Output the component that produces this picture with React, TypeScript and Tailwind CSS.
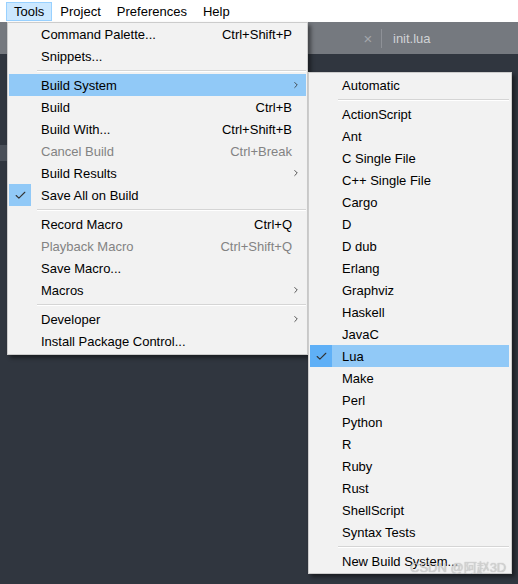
import { Check, ChevronRight } from 'lucide-react';

type Item =
  | { sep: true }
  | {
      sep?: false;
      label: string;
      shortcut?: string;
      sub?: boolean;
      checked?: boolean;
      disabled?: boolean;
      active?: boolean;
    };

const toolsMenu: Item[] = [
  { label: 'Command Palette...', shortcut: 'Ctrl+Shift+P' },
  { label: 'Snippets...' },
  { sep: true },
  { label: 'Build System', sub: true, active: true },
  { label: 'Build', shortcut: 'Ctrl+B' },
  { label: 'Build With...', shortcut: 'Ctrl+Shift+B' },
  { label: 'Cancel Build', shortcut: 'Ctrl+Break', disabled: true },
  { label: 'Build Results', sub: true },
  { label: 'Save All on Build', checked: true },
  { sep: true },
  { label: 'Record Macro', shortcut: 'Ctrl+Q' },
  { label: 'Playback Macro', shortcut: 'Ctrl+Shift+Q', disabled: true },
  { label: 'Save Macro...' },
  { label: 'Macros', sub: true },
  { sep: true },
  { label: 'Developer', sub: true },
  { label: 'Install Package Control...' },
];

const buildSystems: Item[] = [
  { label: 'Automatic' },
  { sep: true },
  ...[
    'ActionScript',
    'Ant',
    'C Single File',
    'C++ Single File',
    'Cargo',
    'D',
    'D dub',
    'Erlang',
    'Graphviz',
    'Haskell',
    'JavaC',
  ].map((label) => ({ label })),
  { label: 'Lua', checked: true, active: true },
  ...['Make', 'Perl', 'Python', 'R', 'Ruby', 'Rust', 'ShellScript', 'Syntax Tests'].map((label) => ({ label })),
  { sep: true },
  { label: 'New Build System...' },
];

function MenuRow({ item }: { item: Item }) {
  if (item.sep) {
    return (
      <div className="h-[7px] flex items-center pl-[28px]">
        <div className="w-full h-[2px] border-t border-[#d5d5d5] border-b border-b-white" />
      </div>
    );
  }
  return (
    <div
      className={`h-[22px] flex items-center ${item.active ? 'bg-[#91c9f7]' : ''} ${
        item.disabled ? 'text-[#838383]' : 'text-black'
      }`}
    >
      <div
        className={`w-[22px] h-[22px] flex items-center justify-center shrink-0 ${
          item.checked ? (item.active ? 'bg-[#5fb0f7]' : 'bg-[#91c9f7]') : ''
        }`}
      >
        {item.checked && <Check className="w-[13px] h-[13px] text-[#333]" strokeWidth={2} />}
      </div>
      <span className="ml-[10px] flex-1 whitespace-nowrap">{item.label}</span>
      {item.shortcut && <span className="mr-[14px] whitespace-nowrap">{item.shortcut}</span>}
      {item.sub && <ChevronRight className="w-[10px] h-[10px] mr-[5px] text-[#333]" strokeWidth={2} />}
    </div>
  );
}

export default function App() {
  return (
    <div
      className="relative w-[518px] h-[584px] overflow-hidden bg-[#30363f] text-[13px] leading-none"
      style={{ fontFamily: '"Liberation Sans", Arial, sans-serif' }}
    >
      {/* Menu bar */}
      <div className="h-[22px] bg-white flex items-center pl-[6px]">
        {['Tools', 'Project', 'Preferences', 'Help'].map((m, i) => (
          <div
            key={m}
            className={`h-[19px] px-[7px] flex items-center border ${
              i === 0 ? 'bg-[#cce8ff] border-[#99d1ff]' : 'border-transparent'
            }`}
          >
            {m}
          </div>
        ))}
      </div>

      {/* Tab bar */}
      <div className="h-[32px] bg-[#75797f] flex items-center pl-[361px]">
        <span className="text-[#a3a6ab] text-[15px] w-[14px] text-center">×</span>
        <div className="w-px h-[19px] bg-[#8e9197] ml-[6px]" />
        <span className="ml-[11px] text-[#d0d2d5]">init.lua</span>
      </div>

      {/* Editor area */}
      <div className="pt-[91px]">
        <div className="h-[16px] w-[300px] bg-[#4a5059]" />
      </div>

      {/* Tools menu */}
      <div className="absolute left-[7px] top-[22px] w-[301px] bg-[#f2f2f2] border border-[#cccccc] pl-px pr-px pb-[2px] shadow-[3px_3px_4px_rgba(0,0,0,0.45)]">
        {toolsMenu.map((item, i) => (
          <MenuRow key={i} item={item} />
        ))}
      </div>

      {/* Build System submenu */}
      <div className="absolute left-[308px] top-[72px] w-[204px] bg-[#f2f2f2] border border-[#cccccc] pt-px pb-px pl-px pr-[2px] shadow-[3px_3px_4px_rgba(0,0,0,0.45)]">
        {buildSystems.map((item, i) => (
          <MenuRow key={i} item={item} />
        ))}
      </div>

      {/* Watermark */}
      <div
        className="absolute left-[410px] top-[561px] text-[13px] text-[#d8d8d8]/80 whitespace-nowrap"
        style={{ fontFamily: '"Liberation Sans", "Noto Sans CJK SC", sans-serif', textShadow: '0 0 1px rgba(0,0,0,0.3)' }}
      >
        CSDN @阿赵3D
      </div>
    </div>
  );
}
